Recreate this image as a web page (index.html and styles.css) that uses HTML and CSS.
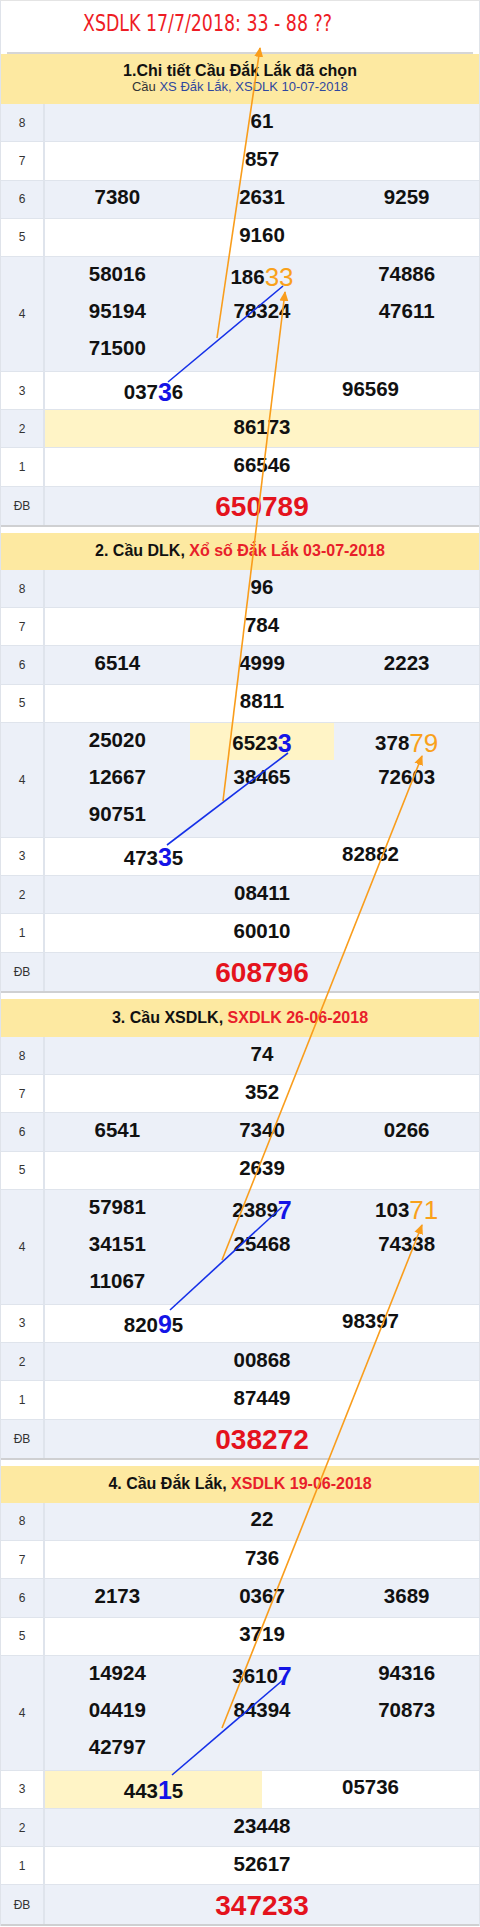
FILE: index.html
```html
<!DOCTYPE html>
<html lang="vi">
<head>
<meta charset="utf-8">
<title>XSDLK 17/7/2018</title>
<link rel="stylesheet" href="styles.css">
</head>
<body>
<div class="page">
  <div class="title"><span class="title-t">XSDLK 17/7/2018: 33 - 88 ??</span></div>

  <section class="sec">
    <header class="hd hd-first">
      <div class="hd-t">1.Chi tiết Cầu Đắk Lắk đã chọn</div>
      <div class="hd-s">Cầu <span class="lnk">XS Đắk Lắk, XSDLK 10-07-2018</span></div>
    </header>
    <div class="row alt"><div class="lb">8</div><div class="d g1"><div class="c">61</div></div></div>
    <div class="row"><div class="lb">7</div><div class="d g1"><div class="c">857</div></div></div>
    <div class="row alt"><div class="lb">6</div><div class="d g3"><div class="c">7380</div><div class="c">2631</div><div class="c">9259</div></div></div>
    <div class="row"><div class="lb">5</div><div class="d g1"><div class="c">9160</div></div></div>
    <div class="row alt r4"><div class="lb">4</div><div class="d g3">
      <div class="col"><div class="c">58016</div><div class="c">95194</div><div class="c">71500</div></div>
      <div class="col"><div class="c big">186<span class="or">33</span></div><div class="c">78324</div></div>
      <div class="col"><div class="c">74886</div><div class="c">47611</div></div>
    </div></div>
    <div class="row"><div class="lb">3</div><div class="d g2"><div class="c big">037<span class="bl">3</span>6</div><div class="c">96569</div></div></div>
    <div class="row alt"><div class="lb">2</div><div class="d g1 hl"><div class="c">86173</div></div></div>
    <div class="row"><div class="lb">1</div><div class="d g1"><div class="c">66546</div></div></div>
    <div class="row alt last"><div class="lb">ĐB</div><div class="d g1"><div class="c db">650789</div></div></div>
  </section>

  <section class="sec">
    <header class="hd"><div>2. Cầu DLK, <span class="red">Xổ số Đắk Lắk 03-07-2018</span></div></header>
    <div class="row alt"><div class="lb">8</div><div class="d g1"><div class="c">96</div></div></div>
    <div class="row"><div class="lb">7</div><div class="d g1"><div class="c">784</div></div></div>
    <div class="row alt"><div class="lb">6</div><div class="d g3"><div class="c">6514</div><div class="c">4999</div><div class="c">2223</div></div></div>
    <div class="row"><div class="lb">5</div><div class="d g1"><div class="c">8811</div></div></div>
    <div class="row alt r4"><div class="lb">4</div><div class="d g3">
      <div class="col"><div class="c">25020</div><div class="c">12667</div><div class="c">90751</div></div>
      <div class="col"><div class="c big hl">6523<span class="bl">3</span></div><div class="c">38465</div></div>
      <div class="col"><div class="c big">378<span class="or">79</span></div><div class="c">72603</div></div>
    </div></div>
    <div class="row"><div class="lb">3</div><div class="d g2"><div class="c big">473<span class="bl">3</span>5</div><div class="c">82882</div></div></div>
    <div class="row alt"><div class="lb">2</div><div class="d g1"><div class="c">08411</div></div></div>
    <div class="row"><div class="lb">1</div><div class="d g1"><div class="c">60010</div></div></div>
    <div class="row alt last"><div class="lb">ĐB</div><div class="d g1"><div class="c db">608796</div></div></div>
  </section>

  <section class="sec">
    <header class="hd hd-38"><div>3. Cầu XSDLK, <span class="red">SXDLK 26-06-2018</span></div></header>
    <div class="row alt"><div class="lb">8</div><div class="d g1"><div class="c">74</div></div></div>
    <div class="row"><div class="lb">7</div><div class="d g1"><div class="c">352</div></div></div>
    <div class="row alt"><div class="lb">6</div><div class="d g3"><div class="c">6541</div><div class="c">7340</div><div class="c">0266</div></div></div>
    <div class="row"><div class="lb">5</div><div class="d g1"><div class="c">2639</div></div></div>
    <div class="row alt r4"><div class="lb">4</div><div class="d g3">
      <div class="col"><div class="c">57981</div><div class="c">34151</div><div class="c">11067</div></div>
      <div class="col"><div class="c big">2389<span class="bl">7</span></div><div class="c">25468</div></div>
      <div class="col"><div class="c big">103<span class="or">71</span></div><div class="c">74338</div></div>
    </div></div>
    <div class="row"><div class="lb">3</div><div class="d g2"><div class="c big">820<span class="bl">9</span>5</div><div class="c">98397</div></div></div>
    <div class="row alt"><div class="lb">2</div><div class="d g1"><div class="c">00868</div></div></div>
    <div class="row"><div class="lb">1</div><div class="d g1"><div class="c">87449</div></div></div>
    <div class="row alt last"><div class="lb">ĐB</div><div class="d g1"><div class="c db">038272</div></div></div>
  </section>

  <section class="sec">
    <header class="hd"><div>4. Cầu Đắk Lắk, <span class="red">XSDLK 19-06-2018</span></div></header>
    <div class="row alt"><div class="lb">8</div><div class="d g1"><div class="c">22</div></div></div>
    <div class="row"><div class="lb">7</div><div class="d g1"><div class="c">736</div></div></div>
    <div class="row alt"><div class="lb">6</div><div class="d g3"><div class="c">2173</div><div class="c">0367</div><div class="c">3689</div></div></div>
    <div class="row"><div class="lb">5</div><div class="d g1"><div class="c">3719</div></div></div>
    <div class="row alt r4"><div class="lb">4</div><div class="d g3">
      <div class="col"><div class="c">14924</div><div class="c">04419</div><div class="c">42797</div></div>
      <div class="col"><div class="c big">3610<span class="bl">7</span></div><div class="c">84394</div></div>
      <div class="col"><div class="c">94316</div><div class="c">70873</div></div>
    </div></div>
    <div class="row"><div class="lb">3</div><div class="d g2"><div class="c big hl">443<span class="bl">1</span>5</div><div class="c">05736</div></div></div>
    <div class="row alt"><div class="lb">2</div><div class="d g1"><div class="c">23448</div></div></div>
    <div class="row"><div class="lb">1</div><div class="d g1"><div class="c">52617</div></div></div>
    <div class="row alt last"><div class="lb">ĐB</div><div class="d g1"><div class="c db">347233</div></div></div>
  </section>

  <svg class="arrows" width="480" height="1927" viewBox="0 0 480 1927" aria-hidden="true">
    <defs>
      <marker id="ah" markerWidth="10" markerHeight="10" refX="9" refY="5" orient="auto" markerUnits="userSpaceOnUse">
        <path d="M0,0.5 L10,5 L0,9.5 Z" fill="#f99d1c"/>
      </marker>
    </defs>
    <g stroke="#f99d1c" stroke-width="1.6" fill="none">
      <line x1="217" y1="338" x2="260" y2="48" marker-end="url(#ah)"/>
      <line x1="223" y1="801" x2="285" y2="292" marker-end="url(#ah)"/>
      <line x1="222" y1="1260" x2="422" y2="756" marker-end="url(#ah)"/>
      <line x1="222" y1="1728" x2="422" y2="1225" marker-end="url(#ah)"/>
    </g>
    <g stroke="#1530e8" stroke-width="1.6" fill="none">
      <line x1="168" y1="382" x2="283" y2="286"/>
      <line x1="167" y1="845" x2="288" y2="753"/>
      <line x1="170" y1="1310" x2="282" y2="1207"/>
      <line x1="172" y1="1775" x2="283" y2="1680"/>
    </g>
  </svg>
</div>
</body>
</html>
```
FILE: styles.css
```css
* { box-sizing: border-box; }
html, body { margin: 0; padding: 0; background: #fff; }
body { font-family: "Liberation Sans", Arial, sans-serif; color: #111; }

.page {
  --u: 38.273px;
  position: relative;
  width: 480px;
  border-left: 1px solid #dfe3ea;
  border-right: 1px solid #dfe3ea;
  border-top: 1px solid #e4e4e4;
}

.title {
  height: 53px;
  margin: 0 6px;
  padding: 10px 0 0 76px;
  border-bottom: 2px solid #d6d6d6;
  font-family: "DejaVu Sans Condensed", "Liberation Sans", sans-serif;
  font-stretch: condensed;
  font-size: 23px;
  line-height: 24px;
  color: #ee1c25;
  white-space: nowrap;
}
.title-t {
  display: inline-block;
  transform: scaleX(0.84);
  transform-origin: 0 50%;
}

.sec {
  border-bottom: 2px solid #cfd0d2;
  margin-bottom: 6px;
}
.sec:last-of-type { margin-bottom: 0; }

.hd {
  height: 37px;
  background: #fde9a1;
  display: flex;
  align-items: center;
  justify-content: center;
  font-weight: bold;
  font-size: 16px;
  line-height: 18px;
  color: #111;
}
.hd-38 { height: 38px; }
.hd-first {
  height: 50px;
  flex-direction: column;
  justify-content: flex-start;
  padding-top: 8px;
}
.hd-t { font-size: 16px; line-height: 18px; font-weight: bold; }
.hd-s { font-size: 13px; line-height: 14px; font-weight: normal; color: #333; }
.lnk { color: #2f479f; }
.red { color: #e8202a; }

.row {
  display: grid;
  grid-template-columns: 44px 1fr;
  height: var(--u);
  border-bottom: 1px solid #dfe4ec;
  background: #fff;
}
.row.alt { background: #ecf0f8; }
.row.r4 { height: calc(var(--u) * 3); }
.row.last { border-bottom: 0; }

.lb {
  display: flex;
  align-items: center;
  justify-content: center;
  border-right: 2px solid #dfe4ec;
  font-size: 12px;
  color: #333;
}

.d { display: grid; }
.g1 { grid-template-columns: 1fr; }
.g2 { grid-template-columns: 1fr 1fr; }
.g3 { grid-template-columns: 1fr 1fr 1fr; }
.col { display: flex; flex-direction: column; }

.c {
  height: calc(var(--u) - 1px);
  display: flex;
  align-items: center;
  justify-content: center;
  padding-bottom: 4px;
  font-weight: bold;
  font-size: 20.5px;
  color: #111;
  white-space: nowrap;
}
.c.big { padding: 3px 0 0; }
.c.db { padding: 3px 0 0; font-size: 28px; color: #e4131d; }

.hl { background: #fff4c6; }

.or { color: #f9a11b; font-weight: normal; font-size: 26px; }
.bl { color: #1414e6; font-weight: bold; font-size: 25px; }

.arrows {
  position: absolute;
  top: -1px;
  left: -1px;
  pointer-events: none;
}
```
